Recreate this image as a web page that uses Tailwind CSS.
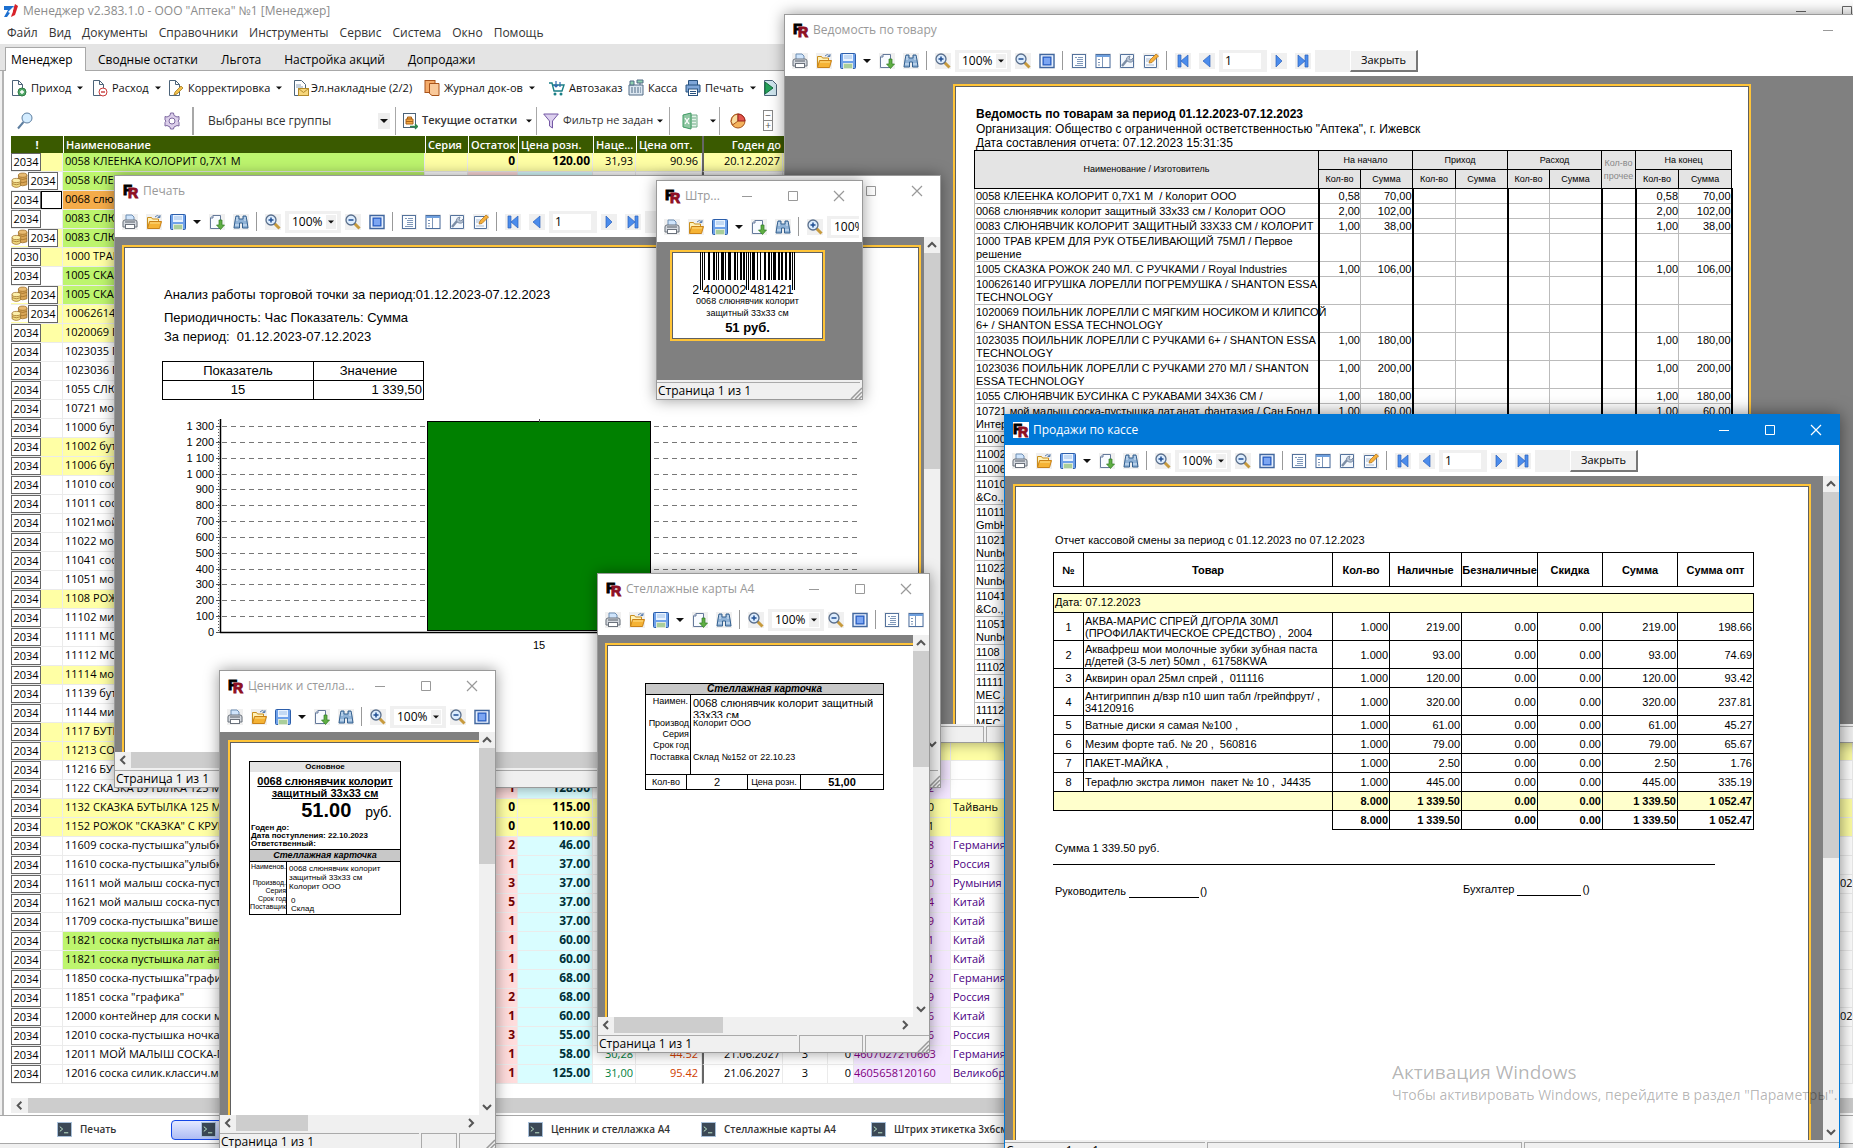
<!DOCTYPE html>
<html lang="ru">
<head>
    <meta charset="UTF-8">
    <meta name="viewport" content="width=device-width, initial-scale=1.0">
    <title>Менеджер v2.383.1.0</title>
    <script src="https://cdn.jsdelivr.net/npm/@tailwindcss/browser@4"></script>
</head>
<body class="relative h-screen overflow-hidden bg-white font-['Open_Sans','Noto_Sans',sans-serif] text-[12px] text-black">

    <!-- Icon set -->
    <svg class="hidden" xmlns="http://www.w3.org/2000/svg">
        <symbol id="i-app" viewBox="0 0 16 16"><path d="M1 3h11L4 14H1l4-7H1z" fill="#1c6fd0"/><path d="M12 1l3 2-3 9-4 2z" fill="#d8232a"/><path d="M5 9l6-6-2 8z" fill="#fff"/></symbol>
        <symbol id="i-fr" viewBox="0 0 16 16"><rect width="16" height="16" fill="#fff"/><text x="0" y="12" font-family="Liberation Sans" font-weight="900" font-size="15" fill="#000" stroke="#000">F</text><text x="5" y="15" font-family="Liberation Sans" font-weight="900" font-size="14" fill="#8e0f24" stroke="#8e0f24">R</text></symbol>
        <symbol id="i-print" viewBox="0 0 16 16"><path d="M4 7V1h6l2 2v4" fill="#cfe4fb" stroke="#6f8fb4"/><path d="M1 8q0-2 2-2h10q2 0 2 2v5H1z" fill="#d5d9df" stroke="#6b727c"/><path d="M3 8h10" stroke="#555c66"/><rect x="3.500" y="10.500" width="9" height="4" fill="#fff" stroke="#6b727c"/></symbol>
        <symbol id="i-open" viewBox="0 0 16 16"><path d="M1.500 14V3.500h4l1 1.500h6V7" fill="#fff1b8" stroke="#c98e1c"/><path d="M1.500 14.500l2-7h12l-2 7z" fill="#f5b335" stroke="#c98218"/><path d="M4 9h10" stroke="#ffe08a"/><path d="M9 3q2-3 5 0m0-2v2.500h-2.500" fill="none" stroke="#5a7fb0"/></symbol>
        <symbol id="i-save" viewBox="0 0 16 16"><rect x=".5" y=".5" width="15" height="15" rx="1" fill="#6ea1ea" stroke="#2c5eaa"/><rect x="3" y="1" width="10" height="7" fill="#e9f3ff"/><path d="M4 3h8M4 5h8" stroke="#9dbfe8"/><rect x="3" y="10" width="10" height="6" fill="#dfe9d9"/><path d="M4 12h8M4 14h8" stroke="#74b35c"/></symbol>
        <symbol id="i-export" viewBox="0 0 16 16"><path d="M4 1.500h7.500v13H1.500V4z" fill="#f8fbff" stroke="#64799a"/><path d="M1.500 4H4V1.500" fill="#d5dfec" stroke="#64799a"/><path d="M10 6h3v5h2.500l-4 4.500-4-4.500H10z" fill="#5fae43" stroke="#2f7c23" stroke-width=".7"/></symbol>
        <symbol id="i-find" viewBox="0 0 16 16"><path d="M3 2h3v3h4V2h3l1 5 1 7H9.500V9h-3v5H1l1-7z" fill="#8fb2d6" stroke="#34608f"/><path d="M2 11h4M10 11h4M4 3v4M12 3v4" stroke="#dcebfa"/></symbol>
        <symbol id="i-zoomin" viewBox="0 0 16 16"><path d="M9.500 9.500l5 5" stroke="#c79a3d" stroke-width="3"/><circle cx="6" cy="6" r="5" fill="#dcecfd" stroke="#5a6f8c" stroke-width="1.300"/><path d="M3.500 6h5M6 3.500v5" stroke="#1f4e93" stroke-width="1.500"/></symbol>
        <symbol id="i-zoomout" viewBox="0 0 16 16"><path d="M9.500 9.500l5 5" stroke="#c79a3d" stroke-width="3"/><circle cx="6" cy="6" r="5" fill="#dcecfd" stroke="#5a6f8c" stroke-width="1.300"/><path d="M3.500 6h5" stroke="#1f4e93" stroke-width="1.500"/></symbol>
        <symbol id="i-full" viewBox="0 0 16 16"><rect x="1" y="1.500" width="14" height="13" fill="#e6f0ff" stroke="#41679f" stroke-width="1.400"/><rect x="4" y="4" width="8" height="8" fill="#4f83e6" stroke="#2557b5"/><path d="M5 6h6M5 8h6M5 10h6" stroke="#a9c8ff"/></symbol>
        <symbol id="i-outline" viewBox="0 0 16 16"><rect x="1.500" y="1.500" width="13" height="13" fill="#fbfdff" stroke="#54729c"/><path d="M4 4.500h2M7 4.500h5M6 6.500h6M6 8.500h6M6 10.500h6M4 12.500h8" stroke="#7f97b8"/></symbol>
        <symbol id="i-thumbs" viewBox="0 0 16 16"><rect x="1" y="1.500" width="14" height="13" fill="#fff" stroke="#4d6f9f"/><path d="M1 3h14" stroke="#6fa0de" stroke-width="2"/><path d="M7.500 4v10M3 6.500h2M3 9.500h2M3 12h2" stroke="#7f97b8"/></symbol>
        <symbol id="i-setup" viewBox="0 0 16 16"><path d="M1.500 1.500h13v13h-13z" fill="#f2f7fd" stroke="#54729c"/><path d="M3 13l5-6" stroke="#7c8ea6" stroke-width="2.500"/><path d="M8 8q-2-4 3-5l-1 3 2 1 2-2q1 5-4 4z" fill="#b9c5d5" stroke="#6f8099" stroke-width=".8"/></symbol>
        <symbol id="i-edit" viewBox="0 0 16 16"><path d="M1.500 2.500h12v12h-12z" fill="#f8fbff" stroke="#54729c"/><path d="M3 6h5M3 8h4M3 12h8" stroke="#a9bad0"/><path d="M6 10l1-3 6-6 2.500 2-6.500 6.500z" fill="#f6b03c" stroke="#b9791b" stroke-width=".8"/></symbol>
        <symbol id="i-first" viewBox="0 0 16 16"><path d="M3 2h3v12H3zM13 2v12L6 8z" fill="#4b8cec" stroke="#2d62bd" stroke-width=".7"/></symbol>
        <symbol id="i-prev" viewBox="0 0 16 16"><path d="M11 2v12L4 8z" fill="#4b8cec" stroke="#2d62bd" stroke-width=".7"/></symbol>
        <symbol id="i-next" viewBox="0 0 16 16"><path d="M5 2v12l6-6z" fill="#4b8cec" stroke="#2d62bd" stroke-width=".7"/></symbol>
        <symbol id="i-last" viewBox="0 0 16 16"><path d="M10 2h3v12h-3zM3 2v12l7-6z" fill="#4b8cec" stroke="#2d62bd" stroke-width=".7"/></symbol>
        <symbol id="i-coins" viewBox="0 0 16 16"><g stroke="#9a6b25" stroke-width=".7"><path d="M7 3v9q4 2 8 0V3z" fill="#d9a657"/><ellipse cx="11" cy="3" rx="4" ry="2" fill="#e8bb72"/><path d="M7 6q4 2 8 0M7 9q4 2 8 0" fill="none"/><path d="M1 8v5q4 3 8 0V8z" fill="#f1dc83"/><ellipse cx="5" cy="8" rx="4" ry="2" fill="#fbeea9"/><path d="M1 11q4 2 8 0" fill="none"/></g></symbol>
        <symbol id="i-docplus" viewBox="0 0 16 18"><path d="M1.500 1.500h6l4 4v11h-10z" fill="#fff" stroke="#4c6379"/><path d="M7.500 1.500v4h4" fill="none" stroke="#4c6379"/><circle cx="11" cy="13" r="4" fill="#53a869" stroke="#2f7c45"/><path d="M9 13h4M11 11v4" stroke="#fff" stroke-width="1.400"/></symbol>
        <symbol id="i-docminus" viewBox="0 0 16 18"><path d="M1.500 1.500h6l4 4v11h-10z" fill="#fff" stroke="#4c6379"/><path d="M7.500 1.500v4h4" fill="none" stroke="#4c6379"/><circle cx="11" cy="13" r="4" fill="#fff" stroke="#c93c3c"/><path d="M9 13h4" stroke="#c93c3c" stroke-width="1.400"/></symbol>
        <symbol id="i-docpen" viewBox="0 0 16 18"><path d="M1.500 1.500h6l4 4v11h-10z" fill="#fff" stroke="#4c6379"/><path d="M7.500 1.500v4h4" fill="none" stroke="#4c6379"/><path d="M6 16l1-3 6-6 2 2-6 6z" fill="#f2c14d" stroke="#a67c20" stroke-width=".8"/></symbol>
        <symbol id="i-docmail" viewBox="0 0 16 18"><path d="M1.500 1.500h7l4 4v11h-11z" fill="#fff" stroke="#4c6379"/><path d="M3 6h5M3 8h7" stroke="#8aa0b4"/><rect x="5.500" y="9.500" width="10" height="7" fill="#f7d77c" stroke="#b38b2b"/><path d="M5.500 9.500l5 4 5-4" fill="none" stroke="#b38b2b"/></symbol>
        <symbol id="i-journal" viewBox="0 0 16 18"><rect x="1" y="1.500" width="10" height="12" fill="#f4ab6a" stroke="#a8531a"/><path d="M5.500 4.500h9.500v12H8l-2.500-2z" fill="#f9c99a" stroke="#a8531a"/></symbol>
        <symbol id="i-cart" viewBox="0 0 16 18"><path d="M0 4h3l2 8h8l2-6H4" fill="none" stroke="#1b7f86" stroke-width="1.400"/><path d="M7 2v6m-2-2l2 2 2-2M11 3v5" fill="none" stroke="#2f66b0" stroke-width="1.200"/><circle cx="6" cy="15" r="1.500" fill="#1b7f86"/><circle cx="12" cy="15" r="1.500" fill="#1b7f86"/></symbol>
        <symbol id="i-cash" viewBox="0 0 16 18"><path d="M1 6h14v10H1z" fill="#dbe6f0" stroke="#506a85"/><path d="M2 2h4v4H2zM9 1h6v3H9zM12 4v2" fill="#8fd0b0" stroke="#506a85"/><path d="M3 9h10M3 11h10M3 13h10" stroke="#506a85" stroke-dasharray="2 1"/></symbol>
        <symbol id="i-prn2" viewBox="0 0 16 18"><path d="M3.500 6V1.500h9V6M1 6h14v7H1z" fill="#7fa6d8" stroke="#29527f"/><rect x="3.500" y="10" width="9" height="6.500" fill="#fff" stroke="#29527f"/><path d="M5 12.500h6M5 14.500h6" stroke="#29527f"/></symbol>
        <symbol id="i-doc-run" viewBox="0 0 16 18"><path d="M1.500 1.500h8l4 4v11h-12z" fill="#cfe5ee" stroke="#4c6379"/><path d="M2 3v12l8-6z" fill="#23a05a" stroke="#146c3b"/></symbol>
        <symbol id="i-search" viewBox="0 0 16 18"><circle cx="10" cy="6" r="5" fill="#d3ecff" stroke="#5e7fa1"/><path d="M6.500 10L1 16.500" stroke="#5e7fa1" stroke-width="2"/></symbol>
        <symbol id="i-gear" viewBox="0 0 16 18"><path d="M6.500 1h3l.5 2.500L13 5l2-.5V8l-1 1 1 1.500V14l-2-.5-3 1.500-.5 2h-3L6 15l-3-1.500-2 .5v-3.500L2 9 1 8V4.500l2 .5 3-1.500z" fill="#dccfea" stroke="#7d68a0"/><circle cx="8" cy="9" r="3" fill="#fff" stroke="#7d68a0"/></symbol>
        <symbol id="i-stock" viewBox="0 0 16 18"><rect x="1.500" y="1.500" width="12" height="14" fill="#fff" stroke="#4c6379"/><path d="M4 7h7v5H4zM5.500 7V5h4v2M4 9.500h7" fill="#f4a742" stroke="#a8631a"/><path d="M8 14.500h7m-2-2.500l2.500 2.500L13 17" fill="none" stroke="#2c8a4c" stroke-width="1.300"/></symbol>
        <symbol id="i-funnel" viewBox="0 0 16 18"><path d="M.7 2h14.600L9.500 9v7L6.500 14V9z" fill="#dcd0ee" stroke="#7458a5"/></symbol>
        <symbol id="i-excel" viewBox="0 0 16 18"><path d="M9 3h6v12H9z" fill="#e5f3ea" stroke="#6daa84"/><path d="M1 3l8-2v16l-8-2z" fill="#8fc7a3" stroke="#3f9b63"/><path d="M3 6l4 6M7 6l-4 6" stroke="#fff" stroke-width="1.300"/><path d="M10 6h4M10 9h4M10 12h4" stroke="#6daa84"/></symbol>
        <symbol id="i-pie" viewBox="0 0 16 18"><circle cx="8" cy="9" r="7" fill="#f3b35d" stroke="#a8531a"/><path d="M8 9V2a7 7 0 0 0-5.500 11z" fill="#f9dd9f" stroke="#a8531a"/><path d="M8 9h7A7 7 0 0 0 8 2z" fill="#e2554d" stroke="#97251f"/></symbol>
        <symbol id="i-term" viewBox="0 0 16 16"><rect x=".5" y=".5" width="15" height="15" fill="#3b4856" stroke="#a9c2dc"/><path d="M3 5l3 2.500L3 10M7.500 11.500H12" fill="none" stroke="#c8f0d0"/></symbol>
        <symbol id="i-up" viewBox="0 0 16 16"><path d="M4 10l4-4 4 4" fill="none" stroke="#555" stroke-width="2"/></symbol>
        <symbol id="i-down" viewBox="0 0 16 16"><path d="M4 6l4 4 4-4" fill="none" stroke="#555" stroke-width="2"/></symbol>
        <symbol id="i-left" viewBox="0 0 16 16"><path d="M10 4L6 8l4 4" fill="none" stroke="#555" stroke-width="2"/></symbol>
        <symbol id="i-right" viewBox="0 0 16 16"><path d="M6 4l4 4-4 4" fill="none" stroke="#555" stroke-width="2"/></symbol>
        <symbol id="i-drop" viewBox="0 0 8 8"><path d="M0 2h8L4 6z" fill="#111"/></symbol>
        <symbol id="i-min" viewBox="0 0 12 12"><path d="M1 6.500h10" stroke="currentColor"/></symbol>
        <symbol id="i-max" viewBox="0 0 12 12"><path d="M1.500 1.500h9v9h-9z" fill="none" stroke="currentColor"/></symbol>
        <symbol id="i-close" viewBox="0 0 12 12"><path d="M1 1l10 10M11 1L1 11" stroke="currentColor" stroke-width="1.200"/></symbol>
        <symbol id="i-grip" viewBox="0 0 12 12"><path d="M1 12L12 1M5 12l7-7M9 12l3-3" stroke="#999" stroke-width="1.500"/></symbol>
    </svg>

    <!-- Main window -->
    <main class="flex h-screen w-full flex-col overflow-hidden">
        <header class="flex h-[22px] shrink-0 items-center justify-between bg-white pl-[3px] text-[#8c8c8c]">
            <div class="flex items-center gap-1">
                <svg class="size-4"><use href="#i-app"/></svg>
                <h1>Менеджер v2.383.1.0 - ООО "Аптека" №1 [Менеджер]</h1>
            </div>
            <div class="flex gap-[34px] text-[#666]">
                <button type="button" aria-label="Свернуть" class="size-3"><svg class="size-3"><use href="#i-min"/></svg></button>
                <button type="button" aria-label="Развернуть" class="size-3"><svg class="size-3"><use href="#i-max"/></svg></button>
            </div>
        </header>
        <nav class="flex h-[22px] shrink-0 items-center gap-[11px] bg-white pl-[7px] text-[#333]">
            <a href="#">Файл</a><a href="#">Вид</a><a href="#">Документы</a><a href="#">Справочники</a><a href="#">Инструменты</a><a href="#">Сервис</a><a href="#">Система</a><a href="#">Окно</a><a href="#">Помощь</a>
        </nav>
        <div class="flex h-[27px] shrink-0 items-end gap-[23px] border-b border-[#a8a8a8] bg-[#e4e4e4] pl-[5px] leading-5">
            <a href="#" class="-mr-[11px] -mb-px h-6 w-[81px] border border-b-0 border-[#a8a8a8] bg-white pt-0.5 pl-[5px]">Менеджер</a>
            <a href="#">Сводные остатки</a>
            <a href="#">Льгота</a>
            <a href="#">Настройка акций</a>
            <a href="#">Допродажи</a>
        </div>

        <div class="flex min-h-0 flex-1 flex-col border-b border-[#a8a8a8] bg-[#f0f0f0] pl-0.5">
            <div class="flex min-h-0 flex-1 flex-col border-l-2 border-[#b4b4b4] bg-white pl-[7px]">
                <div class="flex h-[34px] shrink-0 items-center text-[11px] text-[#111]">
                    <button type="button" class="flex w-[81px] shrink-0 items-center gap-1"><svg class="h-[18px] w-4"><use href="#i-docplus"/></svg>Приход<svg class="ml-0.5 size-1.5"><use href="#i-drop"/></svg></button>
                    <button type="button" class="flex w-[76px] shrink-0 items-center gap-1"><svg class="h-[18px] w-4"><use href="#i-docminus"/></svg>Расход<svg class="ml-0.5 size-1.5"><use href="#i-drop"/></svg></button>
                    <button type="button" class="flex w-[125px] shrink-0 items-center gap-1"><svg class="h-[18px] w-4"><use href="#i-docpen"/></svg>Корректировка<svg class="ml-0.5 size-1.5"><use href="#i-drop"/></svg></button>
                    <button type="button" class="flex w-[131px] shrink-0 items-center gap-0.5 whitespace-nowrap"><svg class="h-[18px] w-4"><use href="#i-docmail"/></svg>Эл.накладные (2/2)</button>
                    <button type="button" class="flex w-[125px] shrink-0 items-center gap-1 whitespace-nowrap"><svg class="h-[18px] w-4"><use href="#i-journal"/></svg>Журнал док-ов<svg class="ml-0.5 size-1.5"><use href="#i-drop"/></svg></button>
                    <button type="button" class="flex w-[79px] shrink-0 items-center gap-1"><svg class="h-[18px] w-4 shrink-0"><use href="#i-cart"/></svg>Автозаказ</button>
                    <button type="button" class="flex w-[57px] shrink-0 items-center gap-1"><svg class="h-[18px] w-4 shrink-0"><use href="#i-cash"/></svg>Касса</button>
                    <button type="button" class="flex w-[78px] shrink-0 items-center gap-1"><svg class="h-[18px] w-4"><use href="#i-prn2"/></svg>Печать<svg class="ml-0.5 size-1.5"><use href="#i-drop"/></svg></button>
                    <button type="button" aria-label="Выполнить"><svg class="h-[18px] w-4"><use href="#i-doc-run"/></svg></button>
                </div>
                <div class="flex h-[31px] shrink-0 items-center text-[#333]">
                    <label class="flex w-[153px] items-center pl-1.5"><svg class="h-[18px] w-4"><use href="#i-search"/></svg><input type="text" aria-label="Поиск" class="w-28 outline-none"></label>
                    <button type="button" aria-label="Настройка" class="w-7"><svg class="h-[18px] w-4"><use href="#i-gear"/></svg></button>
                    <div class="flex h-7 w-[203px] items-center border-l-2 border-[#a8a8a8] pl-3.5">
                        <select aria-label="Группы" class="h-5 w-[170px] appearance-none outline-none"><option>Выбраны все группы</option></select>
                        <span class="flex h-4 w-3 items-center justify-center bg-[#eee]"><svg class="size-2"><use href="#i-drop"/></svg></span>
                    </div>
                    <button type="button" class="flex h-7 w-[141px] items-center border-l border-[#a8a8a8] pl-1.5 text-[11px] font-semibold whitespace-nowrap"><svg class="h-[18px] w-4 shrink-0"><use href="#i-stock"/></svg><span class="w-[108px] pl-1 text-left">Текущие остатки</span><svg class="size-1.5"><use href="#i-drop"/></svg></button>
                    <button type="button" class="flex h-7 w-[133px] items-center border-l border-[#a8a8a8] pl-1.5 text-[11px] whitespace-nowrap"><svg class="h-[18px] w-4 shrink-0"><use href="#i-funnel"/></svg><span class="w-[98px] pl-1 text-left">Фильтр не задан</span><svg class="size-1.5"><use href="#i-drop"/></svg></button>
                    <button type="button" aria-label="Экспорт в Excel" class="flex h-7 w-[50px] items-center gap-3 border-l border-[#a8a8a8] pl-3"><svg class="h-[18px] w-4 shrink-0"><use href="#i-excel"/></svg><svg class="size-1.5"><use href="#i-drop"/></svg></button>
                    <button type="button" aria-label="Диаграмма" class="flex h-7 w-[44px] items-center border-l border-[#a8a8a8] pl-2.5"><svg class="h-[18px] w-4"><use href="#i-pie"/></svg></button>
                    <div class="w-2.5 border border-[#888] text-center text-[10px] leading-[9px] text-[#555]"><div class="border-b border-[#888]">−</div><div>+</div></div>
                </div>

                <table class="w-full shrink-0 table-fixed border-separate border-spacing-0 text-[11px] whitespace-nowrap">
                    <colgroup>
                        <col class="w-[52px]"><col class="w-[362px]"><col class="w-[43px]"><col class="w-[50px]"><col class="w-[75px]"><col class="w-[43px]"><col class="w-[66px]"><col class="w-[81px]"><col class="w-[45px]"><col class="w-[26px]"><col class="w-[97px]"><col class="w-[130px]"><col><col class="w-[13px]">
                    </colgroup>
                    <thead>
                        <tr class="h-[17px] bg-[#3a5a00] text-left leading-[17px] text-white">
                            <th class="p-0 text-center">!</th>
                            <th class="border-l border-white p-0 pl-0.5 font-semibold">Наименование</th>
                            <th class="border-l border-white p-0 pl-0.5 font-semibold">Серия</th>
                            <th class="border-l border-white p-0 pl-0.5 font-semibold">Остаток</th>
                            <th class="border-l border-white p-0 pl-0.5 font-semibold">Цена розн.</th>
                            <th class="border-l border-white p-0 pl-0.5 font-semibold">Наце...</th>
                            <th class="border-l border-white p-0 pl-0.5 font-semibold">Цена опт.</th>
                            <th class="border-l-2 border-[#666] p-0 pr-0.5 text-right font-semibold">Годен до</th>
                            <th></th><th></th><th></th><th></th><th></th><th></th>
                        </tr>
                    </thead>
                    <tbody id="goods"></tbody>
                </table>

                <div class="min-h-0 flex-1"></div>
                <div class="flex h-[15px] shrink-0 bg-[#cdcdcd]">
                    <svg class="h-[15px] w-[17px] bg-[#f0f0f0]"><use href="#i-left"/></svg>
                </div>
                <div class="h-0.5 shrink-0"></div>
            </div>
        </div>

        <nav class="flex h-[27px] shrink-0 items-center bg-white text-[10px] font-semibold text-[#333]">
            <a href="#" class="flex w-[171px] items-center gap-2 pl-[57px]"><svg class="size-[15px]"><use href="#i-term"/></svg>Печать</a>
            <a href="#" aria-label="Активное окно" class="flex h-5 w-[150px] items-center rounded border border-blue-700 bg-linear-to-b from-[#e4e9ff] to-[#aebcf4] pl-[29px]"><svg class="size-[15px]"><use href="#i-term"/></svg></a>
            <a href="#" class="ml-[207px] flex w-[173px] items-center gap-2"><svg class="size-[15px]"><use href="#i-term"/></svg>Ценник и стеллажка А4</a>
            <a href="#" class="flex w-[170px] items-center gap-2"><svg class="size-[15px]"><use href="#i-term"/></svg>Стеллажные карты А4</a>
            <a href="#" class="flex items-center gap-2 whitespace-nowrap"><svg class="size-[15px]"><use href="#i-term"/></svg>Штрих этикетка 3х6см</a>
        </nav>
        <div class="h-[5px] shrink-0 border-t border-[#a8a8a8] bg-[#f0f0f0]"></div>
    </main>

    <!-- Goods statement -->
    <section data-window="Ведомость по товару" class="absolute top-[14px] left-[784px] flex h-[729px] w-[1160px] flex-col border border-[#9a9a9a] bg-white shadow-[0_0_14px_rgba(0,0,0,0.4)]">
        <div class="flex min-h-0 flex-1 overflow-hidden bg-[#808080]">
            <div class="mt-2 ml-[168px] h-[1100px] w-[798px] shrink-0 border-2 border-[#ffc438] bg-white pt-5 pl-[19px] font-['Liberation_Sans',sans-serif] shadow-[inset_0_0_0_1px_#606060]">
                <h2 class="pl-0.5 text-[12px] leading-4 font-bold">Ведомость по товарам за период 01.12.2023-07.12.2023</h2>
                <p class="pl-0.5 leading-[14px]">Организация: Общество с ограниченной остветственностью "Аптека", г. Ижевск</p>
                <p class="pl-0.5 leading-[14px]">Дата составления отчета: 07.12.2023 15:31:35</p>
                <table class="w-[757px] table-fixed border-collapse border-l border-[#bbb] text-[11px] leading-[13px] whitespace-nowrap">
                    <colgroup><col class="w-[344px]"><col class="w-[42px]"><col class="w-[52px]"><col class="w-[43px]"><col class="w-[52px]"><col class="w-[42px]"><col class="w-[52px]"><col class="w-[34px]"><col class="w-[43px]"><col class="w-[53px]"></colgroup>
                    <thead class="bg-[#e4e4e4] text-[9px]">
                        <tr class="h-[19px]">
                            <th rowspan="2" class="border border-black p-0 font-normal">Наименование / Изготовитель</th>
                            <th colspan="2" class="border border-black p-0 font-normal">На начало</th>
                            <th colspan="2" class="border border-black p-0 font-normal">Приход</th>
                            <th colspan="2" class="border border-black p-0 font-normal">Расход</th>
                            <th rowspan="2" class="border border-black p-0 font-normal text-[#888]">Кол-во<br>прочее</th>
                            <th colspan="2" class="border border-black p-0 font-normal">На конец</th>
                        </tr>
                        <tr class="h-[19px]">
                            <th class="border border-black p-0 font-normal">Кол-во</th><th class="border border-black p-0 font-normal">Сумма</th>
                            <th class="border border-black p-0 font-normal">Кол-во</th><th class="border border-black p-0 font-normal">Сумма</th>
                            <th class="border border-black p-0 font-normal">Кол-во</th><th class="border border-black p-0 font-normal">Сумма</th>
                            <th class="border border-black p-0 font-normal">Кол-во</th><th class="border border-black p-0 font-normal">Сумма</th>
                        </tr>
                    </thead>
                    <tbody id="statement"></tbody>
                </table>
            </div>
        </div>
        <footer class="flex h-[18px] shrink-0 gap-0.5 bg-[#f0f0f0] pt-0.5">
            <div class="w-[199px] border-t border-r border-[#aaa]"></div>
            <div class="flex-1 border-t border-l border-[#aaa]"></div>
        </footer>
    </section>

    <!-- Outlet analysis -->
    <section data-window="Печать" class="absolute top-[175px] left-[114px] flex h-[613px] w-[827px] flex-col border border-[#9a9a9a] bg-white shadow-[0_0_14px_rgba(0,0,0,0.4)]">
        <div class="flex min-h-0 flex-1">
            <div class="flex-1 overflow-hidden bg-[#808080]">
                <div class="mt-2 ml-[7px] h-[1100px] w-[799px] border-2 border-[#ffc438] bg-white pt-[38px] pl-[38px] font-['Liberation_Sans',sans-serif] text-[13px] shadow-[inset_0_0_0_1px_#606060]">
                    <p class="pl-0.5 leading-5">Анализ работы торговой точки за период:01.12.2023-07.12.2023</p>
                    <p class="pt-0.5 pl-0.5 leading-[22px]">Периодичность: Час Показатель: Сумма</p>
                    <p class="pl-0.5 leading-4 whitespace-pre">За период:  01.12.2023-07.12.2023</p>
                    <table class="mt-4 w-[262px] table-fixed border-collapse text-center leading-[15px]">
                        <colgroup><col class="w-[151px]"><col></colgroup>
                        <tr class="h-[19px]"><th class="border border-black p-0 pb-0.5 font-normal">Показатель</th><th class="border border-black p-0 pb-0.5 font-normal">Значение</th></tr>
                        <tr class="h-[19px]"><td class="border border-black p-0 pb-0.5">15</td><td class="border border-black p-0 pr-px pb-0.5 text-right">1 339,50</td></tr>
                    </table>
                    <svg id="chart" class="mt-4 ml-[18px] h-[240px] w-[700px]" viewBox="0 0 700 240" font-family="Liberation Sans" font-size="11"></svg>
                </div>
            </div>
            <div class="flex w-4 shrink-0 flex-col bg-[#f0f0f0]"><svg class="size-4"><use href="#i-up"/></svg><div class="h-[216px] bg-[#cdcdcd]"></div><div class="flex-1"></div><svg class="size-4"><use href="#i-down"/></svg></div>
        </div>
        <div class="flex h-4 shrink-0 bg-[#f0f0f0]"><svg class="size-4"><use href="#i-left"/></svg><div class="w-[700px] bg-[#cdcdcd]"></div></div>
        <footer data-status class="flex h-[19px] shrink-0 bg-[#f0f0f0]"></footer>
    </section>

    <!-- Price tag -->
    <section data-window="Ценник и стелла..." class="absolute top-[670px] left-[219px] flex h-[482px] w-[277px] flex-col border border-[#9a9a9a] bg-white shadow-[0_0_14px_rgba(0,0,0,0.4)]">
        <div class="flex min-h-0 flex-1">
            <div class="flex-1 overflow-hidden bg-[#808080]">
                <div class="mt-2 ml-2 h-[1100px] w-[799px] border-2 border-[#ffc438] bg-white pt-[19px] pl-[19px] font-['Liberation_Sans',sans-serif] shadow-[inset_0_0_0_1px_#606060]">
                    <div class="w-[152px] border border-black">
                        <div class="bg-[#e4e4e4] text-center text-[8px] leading-[10px] font-bold">Основное</div>
                        <div class="pt-[3px] text-center text-[11px] leading-3 font-bold underline">0068 слюнявчик колорит<br>защитный 33х33 см</div>
                        <div class="flex items-baseline justify-end gap-3.5 pr-2 leading-[22px]"><b class="text-[20px]">51.00</b><span class="text-[14px]">руб.</span></div>
                        <div class="pt-px pl-px text-[8px] leading-[8px] font-bold">Годен до:<br>Дата поступления: 22.10.2023<br>Ответственный:</div>
                        <div class="mt-px border-y border-black bg-[#c8c8c8] text-center text-[9px] leading-[11px] font-bold italic">Стеллажная карточка</div>
                        <div class="grid h-[52px] grid-cols-[37px_1fr]">
                            <div class="border-r border-black pt-px text-right text-[7px] leading-[8px]">Наименов.<div class="pt-2">Производ.<br>Серия<br>Срок год<br>Поставщик</div></div>
                            <div class="pt-0.5 pl-0.5 text-[8px] leading-[9px]">0068 слюнявчик колорит<br>защитный 33х33 см<br>Колорит ООО<div class="pt-1.5 pl-0.5 leading-[8px]">0<br>Склад</div></div>
                        </div>
                    </div>
                </div>
            </div>
            <div class="flex w-4 shrink-0 flex-col bg-[#f0f0f0]"><svg class="size-4"><use href="#i-up"/></svg><div class="h-[116px] bg-[#cdcdcd]"></div><div class="flex-1"></div><svg class="size-4"><use href="#i-down"/></svg></div>
        </div>
        <div class="flex h-4 shrink-0 bg-[#f0f0f0] pr-4"><svg class="size-4"><use href="#i-left"/></svg><div class="w-[72px] bg-[#cdcdcd]"></div><div class="flex-1"></div><svg class="size-4"><use href="#i-right"/></svg></div>
        <footer data-status class="flex h-5 shrink-0 bg-[#f0f0f0]"><div class="mt-0.5 w-9 border-t border-x border-[#aaa]"></div><div class="mt-0.5 ml-0.5 w-9 border-t border-l border-[#aaa]"></div></footer>
    </section>

    <!-- Shelf card -->
    <section data-window="Стеллажные карты А4" class="absolute top-[573px] left-[597px] flex h-[480px] w-[333px] flex-col border border-[#9a9a9a] bg-white shadow-[0_0_14px_rgba(0,0,0,0.4)]">
        <div class="flex min-h-0 flex-1">
            <div class="flex-1 overflow-hidden bg-[#808080]">
                <div class="mt-2 ml-[7px] h-[1100px] w-[799px] border-2 border-[#ffc438] bg-white pt-[38px] pl-[38px] font-['Liberation_Sans',sans-serif] shadow-[inset_0_0_0_1px_#606060]">
                    <div class="w-[239px] border border-black">
                        <div class="border-b border-black bg-[#c8c8c8] text-center text-[10px] leading-[10px] font-bold italic">Стеллажная карточка</div>
                        <div class="grid h-[79px] grid-cols-[45px_1fr] grid-rows-[23px_11px_11px_12px_22px] text-[9px] leading-[11px]">
                            <div class="border-r border-black pt-px pr-0.5 text-right">Наимен.</div><div class="overflow-hidden pt-0.5 pl-0.5 text-[11px] leading-3">0068 слюнявчик колорит защитный<br>33х33 см</div>
                            <div class="border-r border-black pr-px text-right">Производ</div><div class="pl-0.5">Колорит ООО</div>
                            <div class="border-r border-black pr-px text-right">Серия</div><div></div>
                            <div class="border-r border-black pr-px text-right">Срок год</div><div></div>
                            <div class="border-r border-black pr-px text-right">Поставка</div><div class="pl-0.5">Склад №152 от 22.10.23</div>
                        </div>
                        <div class="grid h-[15px] grid-cols-[41px_61px_53px_1fr] border-t border-black text-center text-[9px] leading-[14px]">
                            <div class="border-r border-black">Кол-во</div><div class="border-r border-black text-[11px]">2</div><div class="border-r border-black">Цена розн.</div><div class="text-[11px] font-bold">51,00</div>
                        </div>
                    </div>
                </div>
            </div>
            <div class="flex w-4 shrink-0 flex-col bg-[#f0f0f0]"><svg class="size-4"><use href="#i-up"/></svg><div class="h-[116px] bg-[#cdcdcd]"></div><div class="flex-1"></div><svg class="size-4"><use href="#i-down"/></svg></div>
        </div>
        <div class="flex h-4 shrink-0 bg-[#f0f0f0] pr-4"><svg class="size-4"><use href="#i-left"/></svg><div class="w-[109px] bg-[#cdcdcd]"></div><div class="flex-1"></div><svg class="size-4"><use href="#i-right"/></svg></div>
        <footer data-status class="flex h-[19px] shrink-0 bg-[#f0f0f0]"><div class="mt-0.5 w-16 border-t border-x border-[#aaa]"></div><div class="mt-0.5 ml-0.5 w-16 border-t border-l border-[#aaa]"></div></footer>
    </section>

    <!-- Barcode label -->
    <section data-window="Штр..." class="absolute top-[180px] left-[656px] flex h-[220px] w-[207px] flex-col border border-[#9a9a9a] bg-white shadow-[0_0_14px_rgba(0,0,0,0.4)]">
        <div class="min-h-0 flex-1 overflow-hidden bg-[#808080]">
            <div class="mt-2 ml-[13px] h-[91px] w-[155px] border-2 border-[#ffc438] bg-white text-center font-['Liberation_Sans',sans-serif] shadow-[inset_0_0_0_1px_#606060]">
                <svg id="barcode" class="mx-auto h-[43px] w-[110px]" viewBox="0 0 110 43" font-family="Liberation Sans" font-size="13"></svg>
                <p class="text-[9px] leading-3">0068 слюнявчик колорит<br>защитный 33х33 см</p>
                <p class="text-[13px] leading-[17px] font-bold">51 руб.</p>
            </div>
        </div>
        <footer data-status class="flex h-[19px] shrink-0 bg-[#f0f0f0]"></footer>
    </section>

    <!-- Cash desk sales -->
    <section data-window="Продажи по кассе" data-active class="absolute top-[414px] left-[1004px] flex h-[746px] w-[836px] flex-col border border-[#0078d7] bg-white shadow-[0_0_16px_rgba(0,0,0,0.5)]">
        <div class="flex min-h-0 flex-1">
            <div class="flex-1 overflow-hidden bg-[#808080]">
                <div class="mt-2 ml-2 h-[1100px] w-[798px] border-2 border-[#ffc438] bg-white pt-[46px] pl-[38px] font-['Liberation_Sans',sans-serif] text-[11px] shadow-[inset_0_0_0_1px_#606060]">
                    <h2 class="pb-1 pl-0.5 leading-4">Отчет кассовой смены за период с 01.12.2023 по 07.12.2023</h2>
                    <table class="w-[700px] table-fixed border-collapse leading-3 whitespace-pre">
                        <colgroup><col class="w-[30px]"><col class="w-[249px]"><col class="w-[57px]"><col class="w-[72px]"><col class="w-[76px]"><col class="w-[65px]"><col class="w-[75px]"><col class="w-[76px]"></colgroup>
                        <thead>
                            <tr class="h-[34px]">
                                <th class="border border-black p-0">№</th><th class="border border-black p-0">Товар</th><th class="border border-black p-0">Кол-во</th><th class="border border-black p-0">Наличные</th><th class="border border-black p-0">Безналичные</th><th class="border border-black p-0">Скидка</th><th class="border border-black p-0">Сумма</th><th class="border border-black p-0">Сумма опт</th>
                            </tr>
                        </thead>
                        <tbody id="sales"></tbody>
                    </table>
                    <p class="pt-2 pl-0.5 leading-5">Сумма 1 339.50 руб.</p>
                    <hr class="mt-1.5 w-[662px] border-black">
                    <div class="flex pt-4 pl-0.5 leading-4"><span class="flex w-[408px] pt-0.5">Руководитель<span class="mr-px ml-[3px] h-[15px] w-[70px] border-b border-black"></span>()</span><span class="flex">Бухгалтер<span class="mr-px ml-[3px] h-[15px] w-16 border-b border-black"></span>()</span></div>
                </div>
            </div>
            <div class="flex w-4 shrink-0 flex-col bg-[#f0f0f0]"><svg class="size-4"><use href="#i-up"/></svg><div class="h-[366px] bg-[#cdcdcd]"></div><div class="flex-1"></div><svg class="size-4"><use href="#i-down"/></svg></div>
        </div>
        <footer data-status class="flex h-[19px] shrink-0 bg-[#f0f0f0]"><div class="mt-0.5 w-[315px] border-t border-x border-[#aaa]"></div><div class="mt-0.5 ml-0.5 w-[315px] border-t border-l border-[#aaa]"></div></footer>
    </section>

    <!-- Activation notice -->
    <aside class="pointer-events-none absolute right-[7px] bottom-[42px] w-[454px] whitespace-nowrap text-black/30">
        <p class="text-[19px] leading-6">Активация Windows</p>
        <p class="text-[14px] leading-[22px]">Чтобы активировать Windows, перейдите в раздел "Параметры".</p>
    </aside>

    <!-- Caption and toolbar shared by the preview windows -->
    <template id="window-head">
        <header class="flex h-[30px] shrink-0 items-center pl-2 text-[#999]">
            <svg class="size-4 shrink-0"><use href="#i-fr"/></svg>
            <h2 class="flex-1 pl-1 whitespace-nowrap"></h2>
            <button type="button" aria-label="Свернуть" class="flex w-[46px] justify-center"><svg class="size-3"><use href="#i-min"/></svg></button>
            <button type="button" aria-label="Развернуть" class="flex w-[46px] justify-center"><svg class="size-3"><use href="#i-max"/></svg></button>
            <button type="button" aria-label="Закрыть" class="flex w-[46px] justify-center"><svg class="size-3"><use href="#i-close"/></svg></button>
        </header>
        <div class="mr-[3px] flex h-[31px] shrink-0 items-center gap-2 overflow-hidden bg-white pl-[7px] text-black">
            <button type="button" aria-label="Печать" class="size-4 shrink-0 bg-[#f0f0f0]"><svg class="size-4"><use href="#i-print"/></svg></button>
            <button type="button" aria-label="Открыть" class="size-4 shrink-0 bg-[#f0f0f0]"><svg class="size-4"><use href="#i-open"/></svg></button>
            <button type="button" aria-label="Сохранить" class="flex shrink-0 items-center gap-[7px]"><svg class="size-4"><use href="#i-save"/></svg><svg class="size-2"><use href="#i-drop"/></svg></button>
            <button type="button" aria-label="Экспорт" class="size-4 shrink-0 bg-[#f0f0f0]"><svg class="size-4"><use href="#i-export"/></svg></button>
            <button type="button" aria-label="Найти" class="size-4 shrink-0 bg-[#f0f0f0]"><svg class="size-4"><use href="#i-find"/></svg></button>
            <span class="-ml-px h-[19px] w-px shrink-0 bg-[#999]"></span>
            <button type="button" aria-label="Увеличить" class="size-4 shrink-0 bg-[#f0f0f0]"><svg class="size-4"><use href="#i-zoomin"/></svg></button>
            <span class="-mx-1 flex h-[22px] w-14 shrink-0 items-center bg-[#f0f0f0] px-1">
                <select aria-label="Масштаб" class="h-4 w-9 appearance-none bg-white pl-[3px] leading-4 outline-none"><option>100%</option></select>
                <span class="flex h-4 flex-1 items-center justify-center border border-white"><svg class="size-1.5"><use href="#i-drop"/></svg></span>
            </span>
            <button type="button" aria-label="Уменьшить" class="size-4 shrink-0 bg-[#f0f0f0]"><svg class="size-4"><use href="#i-zoomout"/></svg></button>
            <button type="button" aria-label="Во весь экран" class="size-4 shrink-0 bg-[#f0f0f0]"><svg class="size-4"><use href="#i-full"/></svg></button>
            <span class="-ml-px h-[19px] w-px shrink-0 bg-[#999]"></span>
            <button type="button" aria-label="Структура" class="size-4 shrink-0 bg-[#f0f0f0]"><svg class="size-4"><use href="#i-outline"/></svg></button>
            <button type="button" aria-label="Миниатюры" class="size-4 shrink-0 bg-[#f0f0f0]"><svg class="size-4"><use href="#i-thumbs"/></svg></button>
            <button type="button" aria-label="Параметры страницы" class="size-4 shrink-0 bg-[#f0f0f0]"><svg class="size-4"><use href="#i-setup"/></svg></button>
            <button type="button" aria-label="Правка" class="size-4 shrink-0 bg-[#f0f0f0]"><svg class="size-4"><use href="#i-edit"/></svg></button>
            <span class="-ml-px h-[19px] w-px shrink-0 bg-[#999]"></span>
            <button type="button" aria-label="Первая" class="size-4 shrink-0 bg-[#f0f0f0]"><svg class="size-4"><use href="#i-first"/></svg></button>
            <button type="button" aria-label="Предыдущая" class="size-4 shrink-0 bg-[#f0f0f0]"><svg class="size-4"><use href="#i-prev"/></svg></button>
            <span class="-mx-1 flex h-[22px] w-12 shrink-0 items-center bg-[#f0f0f0] px-1"><input type="text" aria-label="Страница" value="1" class="h-4 w-[38px] bg-white pl-0.5 outline-none"></span>
            <button type="button" aria-label="Следующая" class="size-4 shrink-0 bg-[#f0f0f0]"><svg class="size-4"><use href="#i-next"/></svg></button>
            <button type="button" aria-label="Последняя" class="size-4 shrink-0 bg-[#f0f0f0]"><svg class="size-4"><use href="#i-last"/></svg></button>
            <span class="-mx-1 flex h-[22px] shrink-0 items-center bg-[#f0f0f0] pl-[35px]"><button type="button" class="h-[22px] w-[68px] border border-r-2 border-b-2 border-white border-r-[#777] border-b-[#777] bg-[#f0f0f0] text-[11px] leading-[18px]">Закрыть</button></span>
        </div>
    </template>

    <script>
        // Window captions, toolbars and status bars
        document.querySelectorAll('[data-window]').forEach(function (win) {
            var head = document.getElementById('window-head').content.cloneNode(true);
            head.querySelector('h2').textContent = win.dataset.window;
            if ('active' in win.dataset) {
                head.querySelector('header').className = 'flex h-[30px] shrink-0 items-center bg-[#0078d7] pl-2 text-white';
            }
            win.prepend(head);
        });
        document.querySelectorAll('[data-status]').forEach(function (bar) {
            bar.insertAdjacentHTML('afterbegin', '<div class="mt-0.5 mr-0.5 flex-1 border-t border-[#aaa] pl-px leading-4">Страница 1 из 1</div>');
            bar.insertAdjacentHTML('beforeend', '<svg class="-ml-3 size-3 self-end"><use href="#i-grip"/></svg>');
        });

        // y - yellow row, g - green name, o - orange name, c - coins in front of the year
        var goods = [
            ['yg', '0058 КЛЕЕНКА КОЛОРИТ 0,7Х1 М', '0', '120.00', '31,93', '90.96', '20.12.2027'],
            ['cg', '0058 КЛЕЕНКА КОЛОРИТ 0,7Х1 М'],
            ['o', '0068 слюнявчик колорит защитный'],
            ['g', '0083 СЛЮНЯВЧИК КОЛОРИТ'],
            ['ycg', '0083 СЛЮНЯВЧИК КОЛОРИТ'],
            ['y', '1000 ТРАВ КРЕМ ДЛЯ РУК'],
            ['g', '1005 СКАЗКА РОЖОК 240 МЛ'],
            ['ycg', '1005 СКАЗКА РОЖОК 240 МЛ'],
            ['yc', '100626140 ИГРУШКА ЛОРЕЛЛИ'],
            ['y', '1020069 ПОИЛЬНИК ЛОРЕЛЛИ'],
            ['', '1023035 ПОИЛЬНИК ЛОРЕЛЛИ'],
            ['', '1023036 ПОИЛЬНИК ЛОРЕЛЛИ'],
            ['', '1055 СЛЮНЯВЧИК БУСИНКА'],
            ['', '10721 мой малыш соска'],
            ['', '11000 бутылочка'],
            ['y', '11002 бутылочка'],
            ['y', '11006 бутылочка'],
            ['', '11010 соска'],
            ['', '11011 соска'],
            ['', '11021мой малыш'],
            ['', '11022 мой малыш'],
            ['', '11041 соска'],
            ['', '11051 мой малыш'],
            ['y', '1108 РОЖОК'],
            ['', '11102 мир детства'],
            ['', '11111 МОЙ МАЛЫШ'],
            ['', '11112 МОЙ МАЛЫШ'],
            ['y', '11114 мой малыш'],
            ['', '11139 бутылочка'],
            ['', '11144 мир детства'],
            ['y', '1117 БУТЫЛКА'],
            ['y', '11213 СОСКА'],
            ['', '11216 БУТЫЛКА'],
            ['', '1122 СКАЗКА БУТЫЛКА 125 МЛ', '1', '128.00', '', '', '', '', '', '2'],
            ['y', '1132 СКАЗКА БУТЫЛКА 125 МЛ', '0', '115.00', '', '', '', '', '', '0', 'Тайвань'],
            ['y', '1152 РОЖОК "СКАЗКА" С КРУГЛ', '0', '110.00', '', '', '', '', '', '1'],
            ['', '11609 соска-пустышка"улыбка"', '2', '46.00', '', '', '', '', '', '8', 'Германия'],
            ['', '11610 соска-пустышка"улыбка"', '1', '37.00', '', '', '', '', '', '3', 'Россия'],
            ['', '11611 мой малыш соска-пустышка', '3', '37.00', '', '', '', '', '', '0', 'Румыния', '02'],
            ['', '11621 мой малыш соска-пуст.', '5', '37.00', '', '', '', '', '', '4', 'Китай'],
            ['', '11709 соска-пустышка"вишенка"', '1', '37.00', '', '', '', '', '', '9', 'Китай'],
            ['g', '11821 соска пустышка лат анат', '1', '60.00', '', '', '', '', '', '1', 'Китай'],
            ['g', '11821 соска пустышка лат анат', '1', '60.00', '', '', '', '', '', '1', 'Китай'],
            ['', '11850 соска-пустышка"графика"', '1', '68.00', '', '', '', '', '', '2', 'Германия'],
            ['', '11851 соска "графика"', '2', '68.00', '', '', '', '', '', '9', 'Россия'],
            ['', '12000 контейнер для соски мир', '1', '60.00', '', '', '', '', '', '6', 'Китай', '02'],
            ['', '12010 соска-пустышка ночка', '3', '55.00', '', '', '', '', '', '6', 'Россия'],
            ['', '12011 МОЙ МАЛЫШ СОСКА-ПУСТ', '1', '58.00', '30,28', '44.52', '21.06.2027', '3', '0', '4607027210663', 'Германия'],
            ['', '12016 соска силик.классич.мед', '1', '125.00', '31,00', '95.42', '21.06.2027', '3', '0', '4605658120160', 'Великобритания']
        ];
        var line = 'h-[19px] overflow-hidden border-r border-b border-[#ebebeb] p-0 pb-0.5 leading-4 ';
        document.getElementById('goods').innerHTML = goods.map(function (g, i) {
            var flags = g[0], y = flags.includes('y');
            var v = function (n) { return g[n] || ''; };
            var nameBg = flags.includes('g') ? 'bg-[#bdf56e]' : flags.includes('o') ? 'bg-[#f5ac4a]' : '';
            var year = i === 5 ? '2030' : '2034';
            var coins = flags.includes('c') ? '<svg class="size-[17px] shrink-0 bg-white"><use href="#i-coins"/></svg>' : '';
            var box = i === 2 ? '<span class="h-[18px] flex-1 border border-black bg-white"></span>' : '';
            return '<tr class="' + (y ? 'bg-[#ffffa5]' : 'bg-white') + '">' +
                '<td class="h-[19px] border-r border-b border-[#ebebeb] p-0"><div class="flex h-[18px]">' + coins + '<span class="h-[18px] w-[30px] shrink-0 border border-[#666] bg-white text-center leading-4">' + year + '</span>' + box + '</div></td>' +
                '<td class="' + line + 'pl-0.5 ' + nameBg + '">' + v(1) + '</td>' +
                '<td class="' + line + '"></td>' +
                '<td class="' + line + 'pr-0.5 text-right text-[12px] font-bold ' + (y ? '' : 'bg-[#ffdcdc] text-[#700000]') + '">' + v(2) + '</td>' +
                '<td class="' + line + 'pr-0.5 text-right text-[12px] font-bold ' + (y ? '' : 'bg-[#d9fdff] text-[#003038]') + '">' + v(3) + '</td>' +
                '<td class="' + line + 'pr-0.5 text-right ' + (y ? '' : 'text-[#00803c]') + '">' + v(4) + '</td>' +
                '<td class="' + line + 'pr-[3px] text-right ' + (y ? '' : 'text-[#d04000]') + '">' + v(5) + '</td>' +
                '<td class="' + line + 'border-l-2 border-l-[#666] pr-0.5 text-right">' + v(6) + '</td>' +
                '<td class="' + line + 'text-center">' + v(7) + '</td>' +
                '<td class="' + line + 'pr-0.5 text-right">' + v(8) + '</td>' +
                '<td class="' + line + 'pr-4 text-right ' + (y ? '' : 'bg-[#f3e6ff] text-[#800080]') + '">' + v(9) + '</td>' +
                '<td class="' + line + 'pl-0.5 ' + (y ? '' : 'text-[#4b0082]') + '">' + v(10) + '</td>' +
                '<td class="' + line + '"></td>' +
                '<td class="' + line + '">' + v(11) + '</td></tr>';
        }).join('');

        // Goods statement rows: name, quantity, sum
        var statement = [
            ['0058 КЛЕЕНКА КОЛОРИТ 0,7Х1 М&nbsp; / Колорит ООО', '0,58', '70,00'],
            ['0068 слюнявчик колорит защитный 33х33 см / Колорит ООО', '2,00', '102,00'],
            ['0083 СЛЮНЯВЧИК КОЛОРИТ ЗАЩИТНЫЙ 33Х33 СМ / КОЛОРИТ', '1,00', '38,00'],
            ['1000 ТРАВ КРЕМ ДЛЯ РУК ОТБЕЛИВАЮЩИЙ 75МЛ / Первое<br>решение', '', ''],
            ['1005 СКАЗКА РОЖОК 240 МЛ. С РУЧКАМИ / Royal Industries', '1,00', '106,00'],
            ['100626140 ИГРУШКА ЛОРЕЛЛИ ПОГРЕМУШКА / SHANTON ESSA<br>TECHNOLOGY', '', ''],
            ['1020069 ПОИЛЬНИК ЛОРЕЛЛИ С МЯГКИМ НОСИКОМ И КЛИПСОЙ<br>6+ / SHANTON ESSA TECHNOLOGY', '', ''],
            ['1023035 ПОИЛЬНИК ЛОРЕЛЛИ С РУЧКАМИ 6+ / SHANTON ESSA<br>TECHNOLOGY', '1,00', '180,00'],
            ['1023036 ПОИЛЬНИК ЛОРЕЛЛИ С РУЧКАМИ 270 МЛ / SHANTON<br>ESSA TECHNOLOGY', '1,00', '200,00'],
            ['1055 СЛЮНЯВЧИК БУСИНКА С РУКАВАМИ 34Х36 СМ /', '1,00', '180,00'],
            ['10721 мой малыш соска-пустышка лат.анат. фантазия / Сан Бонд<br>Интернешнл', '1,00', '60,00'],
            ['11000', '', ''], ['11002', '', ''], ['11006', '', ''],
            ['11010<br>&amp;Co.,', '', ''], ['11011<br>GmbH', '', ''], ['11021<br>Nunberg', '', ''], ['11022<br>Nunberg', '', ''],
            ['11041<br>&amp;Co.,', '', ''], ['11051<br>Nunberg', '', ''], ['1108', '', ''], ['11102', '', ''],
            ['11111<br>МЕС /', '', ''], ['11112<br>МЕС /', '', '']
        ];
        var thin = '<td class="border border-[#bbb] p-0 pt-px text-right align-top">';
        var thick = '<td class="border border-r-2 border-[#bbb] border-r-black p-0 pt-px text-right align-top">';
        document.getElementById('statement').innerHTML = statement.map(function (s) {
            return '<tr class="' + (s[0].includes('<br>') ? 'h-7' : 'h-[15px]') + '">' +
                '<td class="border border-r-2 border-[#bbb] border-r-black p-0 pt-px pl-px align-top">' + s[0] + '</td>' +
                thin + s[1] + '</td>' + thick + s[2] + '</td>' +
                thin + '</td>' + thick + '</td>' + thin + '</td>' + thick + '</td>' + thick + '</td>' +
                thin + s[1] + '</td>' + thick + s[2] + '</td></tr>';
        }).join('');

        // Cash desk sales
        var sales = [
            ['АКВА-МАРИС СПРЕЙ Д/ГОРЛА 30МЛ<br>(ПРОФИЛАКТИЧЕСКОЕ СРЕДСТВО) ,  2004', '219.00', '198.66'],
            ['Аквафреш мои молочные зубки зубная паста<br>д/детей (3-5 лет) 50мл ,  61758KWA', '93.00', '74.69'],
            ['Аквирин орал 25мл спрей ,  011116', '120.00', '93.42'],
            ['Антигриппин д/взр п10 шип табл /грейпфрут/ ,<br>34120916', '320.00', '237.81'],
            ['Ватные диски я самая №100 ,', '61.00', '45.27'],
            ['Мезим форте таб. № 20 ,  560816', '79.00', '65.67'],
            ['ПАКЕТ-МАЙКА ,', '2.50', '1.76'],
            ['Терафлю экстра лимон  пакет № 10 ,  J4435', '445.00', '335.19']
        ];
        var num = function (t) { return '<td class="border border-black p-0 pr-px text-right">' + t + '</td>'; };
        var total = ['8.000', '1 339.50', '0.00', '0.00', '1 339.50', '1 052.47'].map(num).join('');
        document.getElementById('sales').innerHTML =
            '<tr class="h-[7px]"><td colspan="8" class="p-0"></td></tr>' +
            '<tr class="h-[19px] bg-[#ffffcc]"><td colspan="8" class="border border-black p-0 pb-0.5 pl-px">Дата: 07.12.2023</td></tr>' +
            sales.map(function (s, i) {
                return '<tr class="' + (s[0].includes('<br>') ? 'h-7' : 'h-[19px]') + '">' +
                    '<td class="border border-black p-0 text-center">' + (i + 1) + '</td>' +
                    '<td class="border border-black p-0 pl-px">' + s[0] + '</td>' +
                    ['1.000', s[1], '0.00', '0.00', s[1], s[2]].map(num).join('') + '</tr>';
            }).join('') +
            '<tr class="h-[19px] bg-[#ffffcc] font-bold"><td colspan="2" class="border border-black p-0"></td>' + total + '</tr>' +
            '<tr class="h-[19px] font-bold"><td colspan="2" class="p-0"></td>' + total + '</tr>';

        // Hourly chart
        var chart = '';
        for (var k = 0; k <= 13; k++) {
            var cy = 216 - Math.round(k * 206 / 13);
            var label = k >= 10 ? '1 ' + (k === 10 ? '000' : (k - 10) + '00') : String(k * 100);
            chart += '<text x="34" y="' + (cy + 4) + '" text-anchor="end">' + label + '</text>' +
                '<path d="M36 ' + (cy + .5) + 'h5" stroke="#555"/>' +
                '<path d="M42 ' + (cy + .5) + 'h636" stroke="#777" stroke-dasharray="5 4"/>';
        }
        chart += '<path d="M38.500 4v212" stroke="#555" stroke-dasharray="1 2"/><path d="M40.500 3v214M40 216.500h636" stroke="#000" stroke-width="1.500"/>' +
            '<rect x="247.500" y="5.500" width="223" height="209" fill="#008000" stroke="#000"/><path d="M359.500 3v3" stroke="#555"/>' +
            '<text x="359" y="233" text-anchor="middle">15</text>';
        document.getElementById('chart').innerHTML = chart;

        // EAN-13
        var code = '2400002481421', L = ['0001101', '0011001', '0010011', '0111101', '0100011', '0110001', '0101111', '0111011', '0110111', '0001011'];
        var inv = function (s) { return s.replace(/./g, function (b) { return 1 - b; }); };
        var bits = '101';
        for (var n = 1; n < 13; n++) {
            var d = L[code[n]];
            if (n === 7) bits += '01010';
            bits += n > 6 ? inv(d) : 'LLGGLG'[n - 1] === 'G' ? inv(d).split('').reverse().join('') : d;
        }
        bits += '101';
        var bars = '';
        for (var b = 0; b < 95; b++) {
            var guard = b < 3 || b > 91 || (b > 44 && b < 50);
            if (bits[b] === '1') bars += '<rect x="' + (b + 7) + '" y="0" width="1" height="' + (guard ? 38 : 28) + '"/>';
        }
        bars += '<text x="-1" y="42">2</text><text x="10" y="42">400002</text><text x="57" y="42">481421</text>';
        document.getElementById('barcode').innerHTML = bars;
    </script>
</body>
</html>
